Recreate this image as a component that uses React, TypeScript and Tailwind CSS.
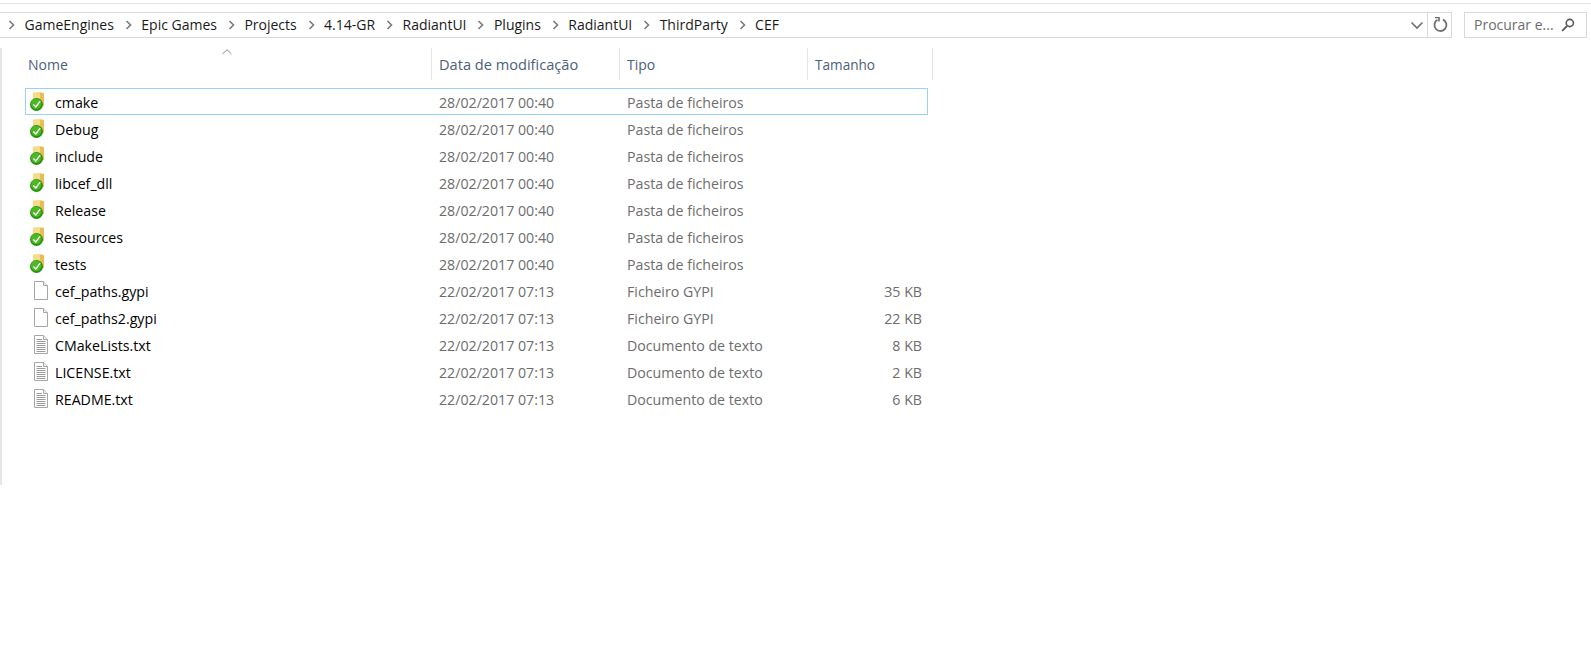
import React from "react";

const crumbs = [
  "GameEngines",
  "Epic Games",
  "Projects",
  "4.14-GR",
  "RadiantUI",
  "Plugins",
  "RadiantUI",
  "ThirdParty",
  "CEF",
];

type Row = { name: string; date: string; type: string; size?: string; icon: "folder" | "blank" | "text" };

const folderDate = "28/02/2017 00:40";
const fileDate = "22/02/2017 07:13";

const rows: Row[] = [
  { name: "cmake", date: folderDate, type: "Pasta de ficheiros", icon: "folder" },
  { name: "Debug", date: folderDate, type: "Pasta de ficheiros", icon: "folder" },
  { name: "include", date: folderDate, type: "Pasta de ficheiros", icon: "folder" },
  { name: "libcef_dll", date: folderDate, type: "Pasta de ficheiros", icon: "folder" },
  { name: "Release", date: folderDate, type: "Pasta de ficheiros", icon: "folder" },
  { name: "Resources", date: folderDate, type: "Pasta de ficheiros", icon: "folder" },
  { name: "tests", date: folderDate, type: "Pasta de ficheiros", icon: "folder" },
  { name: "cef_paths.gypi", date: fileDate, type: "Ficheiro GYPI", size: "35 KB", icon: "blank" },
  { name: "cef_paths2.gypi", date: fileDate, type: "Ficheiro GYPI", size: "22 KB", icon: "blank" },
  { name: "CMakeLists.txt", date: fileDate, type: "Documento de texto", size: "8 KB", icon: "text" },
  { name: "LICENSE.txt", date: fileDate, type: "Documento de texto", size: "2 KB", icon: "text" },
  { name: "README.txt", date: fileDate, type: "Documento de texto", size: "6 KB", icon: "text" },
];

const Chevron = () => (
  <svg width="7" height="10" viewBox="0 0 7 10" className="shrink-0">
    <path d="M1.5 1 L5.5 5 L1.5 9" fill="none" stroke="#7a7a7a" strokeWidth="1.6" />
  </svg>
);

const FolderIcon = () => (
  <svg width="18" height="20" viewBox="0 0 18 20">
    <path d="M3 0.5 L9 0 L14 1 L14 14 L3 14 Z" fill="#f6dc8a" />
    <path d="M10 0.5 L14 1 L14 14 L10 14 Z" fill="#e8bd55" />
    <circle cx="6.5" cy="12.5" r="6.5" fill="#24930f" />
    <circle cx="6.2" cy="11.8" r="5.2" fill="#4bb824" />
    <path d="M3.4 12.5 L5.8 15 L10.2 9.2" fill="none" stroke="#ffffff" strokeWidth="1.3" />
  </svg>
);

const FileIcon = ({ lines }: { lines: boolean }) => (
  <svg width="14" height="20" viewBox="0 0 14 20">
    <path d="M0.5 0.5 H9.5 L13.5 4.5 V18.5 H0.5 Z" fill="#ffffff" stroke="#a6a6a6" />
    <path d="M9.5 0.5 V4.5 H13.5" fill="#f0f0f0" stroke="#a6a6a6" />
    {lines && (
      <path
        d="M2.5 4.5 H8 M2.5 6.5 H11.5 M2.5 8.5 H11.5 M2.5 10.5 H11.5 M2.5 12.5 H11.5 M2.5 14.5 H11.5 M2.5 16.5 H11.5"
        stroke="#9a9a9a"
        fill="none"
      />
    )}
  </svg>
);

const App = () => {
  return (
    <div className="w-full h-screen bg-white overflow-hidden font-['Open_Sans','Liberation_Sans',sans-serif] text-[14px] leading-none">
      <div className="h-[4px] border-b border-[#e2e2e2]" />
      <div className="flex mt-[8px] h-[26px]">
        <div className="w-[1427px] flex items-center border-y border-[#d9d9d9] pl-[8px]">
          <div className="flex items-center gap-[9.5px] text-[#1a1a1a]">
            {crumbs.map((c, i) => (
              <React.Fragment key={i}>
                <Chevron />
                <span className="mr-[1.4px]">{c}</span>
              </React.Fragment>
            ))}
          </div>
          <svg width="14" height="9" viewBox="0 0 14 9" className="ml-auto mr-[3px]">
            <path d="M1.5 1.5 L7 7 L12.5 1.5" fill="none" stroke="#6e6e6e" strokeWidth="1.6" />
          </svg>
        </div>
        <div className="w-[25px] flex items-center justify-center border border-[#d9d9d9]">
          <svg width="16" height="16" viewBox="0 0 16 16">
            <path d="M5.5 2.8 A6 6 0 1 0 11 2.6" fill="none" stroke="#6e6e6e" strokeWidth="1.8" />
            <path d="M3 0.5 H7 V4.5" fill="none" stroke="#6e6e6e" strokeWidth="1.6" />
          </svg>
        </div>
        <div className="ml-[12px] w-[123px] flex items-center justify-between border border-[#d9d9d9] pl-[9px] pr-[11px] text-[#6d6d6d]">
          <span>Procurar e...</span>
          <svg width="14" height="14" viewBox="0 0 14 14">
            <circle cx="8.8" cy="5" r="3.6" fill="none" stroke="#5a5a5a" strokeWidth="1.6" />
            <path d="M6 8 L1.2 12.8" stroke="#5a5a5a" strokeWidth="1.8" />
          </svg>
        </div>
      </div>
      <div className="flex mt-[10px]">
        <div className="w-[2px] h-[437px] bg-[#e6e6e6]" />
        <div className="ml-[23px] w-[908px]">
          <div className="relative flex h-[32px] text-[#4c607a]">
            <svg width="10" height="6" viewBox="0 0 10 6" className="absolute left-[197px] top-[1px]">
              <path d="M0.5 5 L5 0.8 L9.5 5" fill="none" stroke="#8a8a8a" />
            </svg>
            <div className="w-[407px] flex items-center pl-[3px] pt-[2px] border-r border-[#e5e5e5]">Nome</div>
            <div className="w-[188px] flex items-center pl-[7px] border-r border-[#e5e5e5] text-[14.6px]">
              Data de modificação
            </div>
            <div className="w-[188px] flex items-center pl-[7px] pt-[2px] border-r border-[#e5e5e5]">Tipo</div>
            <div className="w-[125px] flex items-center pl-[7px] pt-[2px] border-r border-[#e5e5e5] text-[13.6px]">
              Tamanho
            </div>
          </div>
          <div className="mt-[8px] w-[903px] text-[14.2px]">
            {rows.map((r, i) => (
              <div
                key={r.name}
                className={`flex items-center h-[27px] border ${i === 0 ? "border-[#99d1f7]" : "border-transparent"}`}
              >
                <div className="w-[405px] flex items-center text-black">
                  {r.icon === "folder" ? (
                    <span className="w-[29px] flex pl-[4px]">
                      <FolderIcon />
                    </span>
                  ) : (
                    <span className="w-[29px] flex pl-[8px]">
                      <FileIcon lines={r.icon === "text"} />
                    </span>
                  )}
                  <span className="pt-[4px]">{r.name}</span>
                </div>
                <div className="w-[188px] pl-[8px] pt-[4px] text-[#6d6d6d]">{r.date}</div>
                <div className="w-[188px] pl-[8px] pt-[4px] text-[#6d6d6d]">{r.type}</div>
                <div className="w-[115px] pt-[4px] text-right text-[#6d6d6d]">{r.size}</div>
              </div>
            ))}
          </div>
        </div>
      </div>
    </div>
  );
};

export default App;
